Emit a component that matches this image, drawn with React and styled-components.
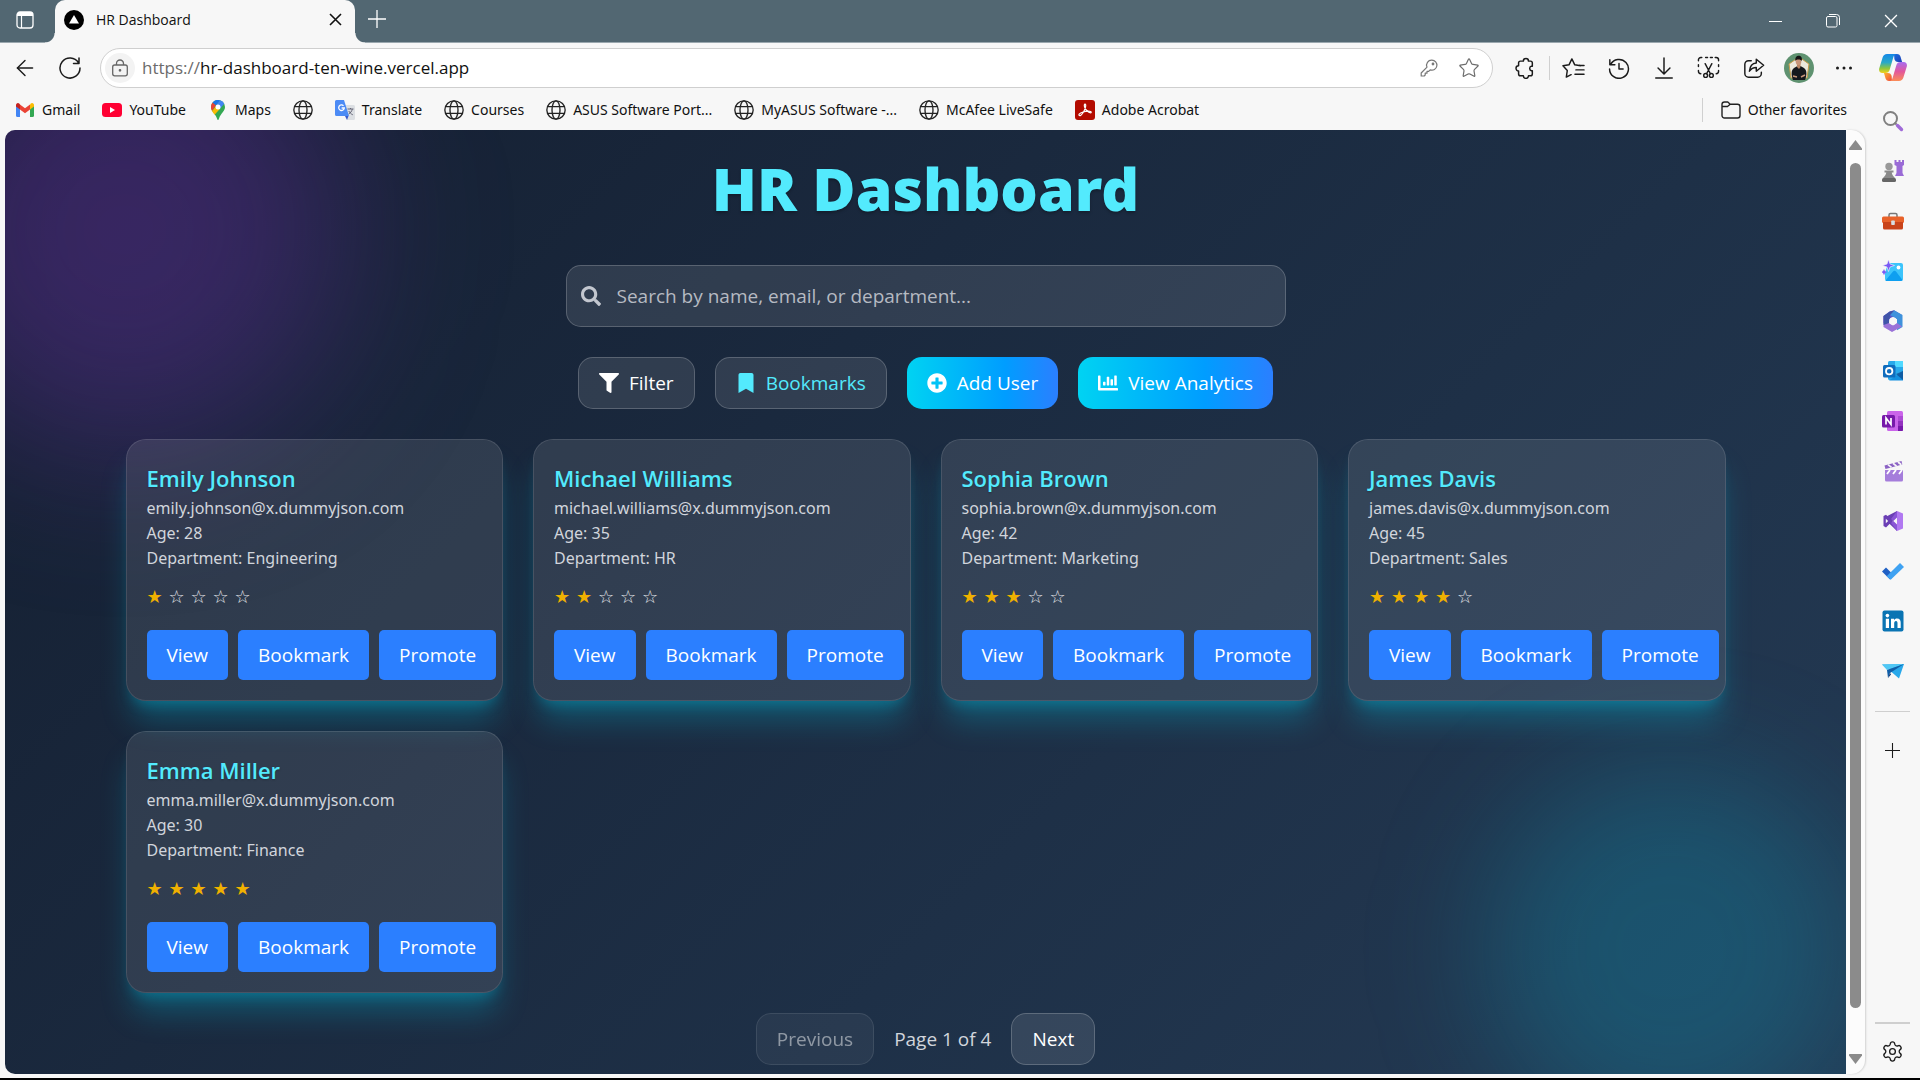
import React from "react";
import styled, { createGlobalStyle, css } from "styled-components";
import { FaSearch, FaFilter, FaBookmark, FaPlusCircle, FaChartBar } from "react-icons/fa";
import { ArrowLeft, Star, Settings } from "lucide-react";

const GlobalStyle = createGlobalStyle`
  *, *::before, *::after { box-sizing: border-box; }
  body { margin: 0; background: #f7f7f7; font-family: "Open Sans", "Noto Sans", sans-serif; }
  button, input { font: inherit; color: inherit; }
  button { border: 0; padding: 0; background: none; cursor: pointer; }
  a { color: inherit; text-decoration: none; }
  h1, h2, p { margin: 0; }
  svg { display: block; flex: none; }
`;

/* ---------- browser frame ---------- */

const Window = styled.div`
  display: flex;
  flex-direction: column;
  height: 100vh;
  min-height: 640px;
  background: #f7f7f7;
  border-bottom: 2px solid #000;
  overflow: hidden;
`;

const TabStrip = styled.header`
  display: flex;
  flex: none;
  height: 43px;
  background: #526772;
  border-bottom: 1px solid #9aa7ae;
  color: #fff;
`;

const StripButton = styled.button`
  display: grid;
  place-items: center;
  width: ${(p) => p.$w}px;
  height: ${(p) => p.$h || 38}px;
`;

const Tab = styled.div`
  position: relative;
  display: flex;
  align-items: center;
  width: 300px;
  height: 43px;
  margin-left: 5px;
  padding: 0 10px 4px 9px;
  border-radius: 10px 10px 0 0;
  background: #f7f7f7;
  color: #111;
  font-size: 14px;
  &::before, &::after {
    content: "";
    position: absolute;
    bottom: 0;
    width: 10px;
    height: 10px;
  }
  &::before { left: -10px; background: radial-gradient(circle at 0 0, transparent 9px, #f7f7f7 10px); }
  &::after { right: -10px; background: radial-gradient(circle at 100% 0, transparent 9px, #f7f7f7 10px); }
`;

const TabTitle = styled.span`
  flex: 1;
  margin-left: 12px;
`;

const WindowControls = styled.div`
  display: flex;
  margin-left: auto;
`;

const Toolbar = styled.div`
  display: flex;
  flex: none;
  align-items: center;
  height: 49px;
  padding-left: 2px;
  color: #1b1b1b;
`;

const ToolButton = styled.button`
  display: grid;
  place-items: center;
  flex: none;
  width: ${(p) => p.$w || 45}px;
  height: 40px;
`;

const AddressBar = styled.form`
  display: flex;
  flex: 1;
  align-items: center;
  height: 40px;
  margin: 0 9px 0 8px;
  padding: 0 3px 0 4px;
  border: 1px solid #cfcfcf;
  border-radius: 20px;
  background: #fff;
  color: #6c6c6c;
  font-size: 17px;
`;

const SiteInfo = styled.button`
  display: grid;
  place-items: center;
  width: 30px;
  height: 30px;
  margin-right: 7px;
  border-radius: 50%;
  background: #f3f3f3;
`;

const AddressInput = styled.input`
  flex: 1;
  min-width: 0;
  padding: 0;
  border: 0;
  outline: 0;
  background: none;
  color: #111;
`;

const AddressAction = styled.button`
  display: grid;
  place-items: center;
  width: 40px;
  height: 30px;
`;

const ToolDivider = styled.span`
  width: 1px;
  height: 24px;
  margin: 0 1px 0 2px;
  background: #d0d0d0;
`;

const Favorites = styled.nav`
  display: flex;
  flex: none;
  align-items: center;
  gap: 22px;
  height: 38px;
  padding: 0 73px 3px 15px;
  color: #111;
  font-family: "Noto Sans", "Open Sans", sans-serif;
  font-size: 14px;
  white-space: nowrap;
`;

const Favorite = styled.a`
  display: flex;
  align-items: center;
  gap: 7px;
`;

const OtherFavorites = styled(Favorite)`
  margin-left: auto;
  padding-left: 18px;
  border-left: 1px solid #d0d0d0;
  height: 24px;
`;

const Body = styled.div`
  display: flex;
  flex: 1;
  min-height: 0;
  padding: 0 0 4px 5px;
`;

const ScrollTrack = styled.div`
  display: flex;
  flex: none;
  flex-direction: column;
  align-items: center;
  gap: 13px;
  width: 19px;
  padding: 10px 0;
  border-radius: 0 14px 14px 0;
  background: #fcfcfc;
  box-shadow: 1px 0 2px rgba(0, 0, 0, 0.15);
`;

const ScrollThumb = styled.div`
  flex: 1;
  width: 11px;
  margin-bottom: 33px;
  border-radius: 6px;
  background: #8b8b8b;
`;

const Sidebar = styled.aside`
  display: flex;
  flex: none;
  flex-direction: column;
  align-items: center;
  width: 55px;
  padding-bottom: 3px;
  color: #1b1b1b;
`;

const SideButton = styled.button`
  display: grid;
  place-items: center;
  flex: none;
  width: 40px;
  height: 40px;
  margin-bottom: 10px;
`;

const SideList = styled.div`
  display: flex;
  flex-direction: column;
  align-items: center;
  margin-top: -29px;
`;

const SideRule = styled.span`
  flex: none;
  width: 35px;
  height: 1px;
  margin: 10px 0 18px;
  background: #cfcfcf;
`;

const SideFooter = styled.div`
  display: flex;
  flex-direction: column;
  align-items: center;
  margin-top: auto;
  padding-top: 7px;
  border-top: 2px solid #cfcfcf;
  width: 35px;
`;

/* ---------- dashboard ---------- */

const Page = styled.main`
  position: relative;
  flex: 1;
  min-width: 0;
  overflow: hidden;
  padding: 30px 30px 0;
  border-top-left-radius: 10px;
  border-bottom-left-radius: 10px;
  background: linear-gradient(135deg, #141e30, #243b55);
  color: #fff;
  font-size: 19px;
  line-height: 30px;
`;

const Glow = styled.div`
  position: absolute;
  border-radius: 50%;
  ${(p) =>
    p.$tone === "purple"
      ? css`
          top: -120px;
          left: -100px;
          width: 440px;
          height: 440px;
          background: rgba(125, 52, 190, 0.33);
          filter: blur(80px);
        `
      : css`
          right: -10px;
          bottom: -60px;
          width: 370px;
          height: 370px;
          background: rgba(6, 182, 212, 0.22);
          filter: blur(60px);
        `}
`;

const Content = styled.div`
  position: relative;
  display: flex;
  flex-direction: column;
  align-items: center;
  max-width: 1600px;
  margin: 0 auto;
`;

const Title = styled.h1`
  margin-bottom: 49px;
  color: #53eafd;
  font-family: "Noto Sans", "Open Sans", sans-serif;
  font-size: 59px;
  font-weight: 900;
  line-height: 56px;
  text-shadow: 0 2px 3px rgba(0, 0, 0, 0.25);
`;

const glass = css`
  border: 1px solid rgba(255, 255, 255, 0.2);
  background: rgba(255, 255, 255, 0.1);
`;

const SearchBox = styled.label`
  ${glass}
  display: flex;
  align-items: center;
  gap: 16px;
  width: 100%;
  max-width: 720px;
  height: 62px;
  margin-bottom: 30px;
  padding: 0 14px;
  border-radius: 15px;
  color: #c3c7cf;
`;

const SearchInput = styled.input`
  flex: 1;
  min-width: 0;
  padding: 0;
  border: 0;
  outline: 0;
  background: none;
  &::placeholder { color: #b6bac2; opacity: 1; }
`;

const Actions = styled.div`
  display: flex;
  flex-wrap: wrap;
  justify-content: center;
  gap: 20px;
  margin-bottom: 30px;
`;

const ActionButton = styled.button`
  display: flex;
  align-items: center;
  gap: 10px;
  height: 52px;
  padding: 0 20px;
  border-radius: 15px;
  ${(p) =>
    p.$solid
      ? css`background: linear-gradient(to right, #00d3f2, #009dff 65%, #2b7fff);`
      : glass}
  ${(p) => p.$accent && css`color: #53eafd;`}
  &:disabled { opacity: 0.5; cursor: default; }
`;

const Grid = styled.div`
  display: grid;
  grid-template-columns: repeat(auto-fill, minmax(370px, 1fr));
  gap: 30px;
  width: 100%;
  margin-bottom: 20px;
`;

const Card = styled.article`
  ${glass}
  padding: 20px;
  border-radius: 20px;
  background-clip: padding-box;
  box-shadow: 0 25px 31px -6px rgba(0, 184, 219, 0.3), 0 10px 13px -7px rgba(0, 184, 219, 0.35);
`;

const Name = styled.h2`
  color: #53eafd;
  font-size: 22px;
  font-weight: 600;
  line-height: 36px;
  text-shadow: 0 1px 2px rgba(0, 0, 0, 0.25);
`;

const Detail = styled.p`
  color: #d1d5dc;
  font-family: "Noto Sans", "Open Sans", sans-serif;
  font-size: 16px;
  line-height: 25px;
`;

const Rating = styled.div`
  display: flex;
  margin: 9px 0 17px;
  font-family: "DejaVu Sans", sans-serif;
  font-size: 18px;
  line-height: 33px;
`;

const Mark = styled.span`
  width: 22px;
  color: ${(p) => (p.$on ? "#f0b100" : "#e5e7eb")};
`;

const CardActions = styled.div`
  display: flex;
  gap: 10px;
`;

const CardButton = styled.button`
  height: 50px;
  padding: 0 20px;
  border-radius: 5px;
  background: #2b7fff;
  color: #fff;
`;

const Pager = styled.div`
  display: flex;
  align-items: center;
  gap: 20px;
  color: #fff;
`;

const PageCount = styled.span`
  color: #d1d5dc;
`;

/* ---------- icons ---------- */

const Line = ({ size = 24, w = 1.4, children }) => (
  <svg width={size} height={size} viewBox="0 0 24 24" fill="none" stroke="currentColor" strokeWidth={w} strokeLinecap="round" strokeLinejoin="round" aria-hidden="true">
    {children}
  </svg>
);

const Art = ({ size = 22, children }) => (
  <svg width={size} height={size} viewBox="0 0 22 22" aria-hidden="true">{children}</svg>
);

const GlobeIcon = () => (
  <svg width="20" height="20" viewBox="0 0 24 24" fill="none" stroke="#222" strokeWidth="1.6" aria-hidden="true">
    <circle cx="12" cy="12" r="11" />
    <ellipse cx="12" cy="12" rx="4.8" ry="11" />
    <path d="M2 8h20M2 16h20" />
  </svg>
);

const GmailIcon = () => (
  <svg width="20" height="20" viewBox="0 0 20 20" aria-hidden="true">
    <path d="M1 5v10.500a1.500 1.500 0 0 0 1.500 1.500H5V8.500z" fill="#4285f4" />
    <path d="M19 5v10.500a1.500 1.500 0 0 1-1.500 1.500H15V8.500z" fill="#34a853" />
    <path d="M15 4.500V9.500l4-3V5a2 2 0 0 0-3.200-1.600z" fill="#fbbc04" />
    <path d="M5 9.500V4.500l5 3.700 5-3.700v5l-5 3.700z" fill="#ea4335" />
    <path d="M1 5v1.500l4 3v-5L4.200 3.400A2 2 0 0 0 1 5z" fill="#c5221f" />
  </svg>
);

const YouTubeIcon = () => (
  <svg width="20" height="20" viewBox="0 0 20 20" aria-hidden="true">
    <rect x="0" y="3" width="20" height="14" rx="3.500" fill="#ff0033" />
    <path d="M8 7v6l5-3z" fill="#fff" />
  </svg>
);

const MapsIcon = () => (
  <svg width="20" height="20" viewBox="0 0 20 20" aria-hidden="true">
    <path d="M10 0a7 7 0 0 1 7 7c0 4-4 6-6 11.500-.3 1-.6 1.500-1 1.500s-.7-.5-1-1.500C7 13 3 11 3 7a7 7 0 0 1 7-7z" fill="#34a853" />
    <path d="M4.600 2.500 8 5.300 4 11C3.300 9.800 3 8.500 3 7c0-1.700.6-3.300 1.600-4.500z" fill="#ea4335" />
    <path d="M4.600 2.500A7 7 0 0 1 12 .3L8 5.300z" fill="#1a73e8" />
    <path d="M12 .3a7 7 0 0 1 4.200 3.500L11.800 9 8 5.300z" fill="#4285f4" />
    <path d="M4 11 8.300 6l3.500 3-5.200 5.700C5.500 13.400 4.600 12.300 4 11z" fill="#fbbc04" />
    <circle cx="10" cy="7" r="2.500" fill="#fff" />
  </svg>
);

const TranslateIcon = () => (
  <svg width="20" height="20" viewBox="0 0 20 20" aria-hidden="true">
    <path d="M7 5h11.500A1.500 1.500 0 0 1 20 6.500v12a1.500 1.500 0 0 1-1.500 1.500H12z" fill="#dcdfe3" />
    <path d="M10 16h3.500L12 20z" fill="#3a5bcc" />
    <path d="M1.500 0H9l5 16H1.500A1.500 1.500 0 0 1 0 14.500v-13A1.500 1.500 0 0 1 1.500 0z" fill="#4c8bf5" />
    <path d="M8.500 5.700A2.800 2.800 0 1 0 9.300 8H6.600" fill="none" stroke="#fff" strokeWidth="1.300" />
    <path d="M12.500 9h6M15.500 8v1M17.300 9c-.5 2.500-2 4-3.600 5M13.800 11c.8 1.500 2.200 3 4 3.800" fill="none" stroke="#667" strokeWidth="1" />
  </svg>
);

const AcrobatIcon = () => (
  <svg width="20" height="20" viewBox="0 0 20 20" aria-hidden="true">
    <rect width="20" height="20" rx="3" fill="#b30b00" />
    <path d="M4 15.200c-.8-1.300 3-3.400 6.800-3.900 3.400-.4 5.600 0 5.400 1-.4 1.600-5.500-1-6.600-5.300-.5-2-.3-3 .4-3 1.500 0 .5 5-1.600 8.300-1.700 2.700-3.500 4-4.400 2.900z" fill="none" stroke="#fff" strokeWidth="1.200" />
  </svg>
);

const FolderIcon = () => (
  <svg width="20" height="20" viewBox="0 0 20 20" fill="none" stroke="#222" strokeWidth="1.400" strokeLinejoin="round" aria-hidden="true">
    <path d="M1 4.500A2.500 2.500 0 0 1 3.500 2H6.800l2.400 2.200h7.300A2.500 2.500 0 0 1 19 6.700v8.800a2.500 2.500 0 0 1-2.500 2.500h-13A2.500 2.500 0 0 1 1 15.500zM1 6.500h5.500l2.700-2.300" />
  </svg>
);

const TabListIcon = () => (
  <svg width="18" height="18" viewBox="0 0 18 18" aria-hidden="true">
    <rect x="1" y="1" width="16" height="16" rx="3" fill="none" stroke="#fff" strokeWidth="1.300" />
    <path d="M1 4a3 3 0 0 1 3-3h10a3 3 0 0 1 3 3v1H1z" fill="#fff" />
    <path d="M5.500 5v12" stroke="#fff" strokeWidth="1.200" />
  </svg>
);

const VercelIcon = () => (
  <svg width="20" height="20" viewBox="0 0 20 20" aria-hidden="true">
    <circle cx="10" cy="10" r="10" fill="#000" />
    <path d="M10 5l5 8.500H5z" fill="#fff" />
  </svg>
);

const PlusIcon = ({ size = 18 }) => (
  <svg width={size} height={size} viewBox="0 0 18 18" stroke="currentColor" strokeWidth="1.300" aria-hidden="true"><path d="M9 0v18M0 9h18" /></svg>
);

const CloseIcon = ({ size = 13, w = 1.2 }) => (
  <svg width={size} height={size} viewBox="0 0 13 13" stroke="currentColor" strokeWidth={w} aria-hidden="true"><path d="M1 1l11 11M12 1L1 12" /></svg>
);

const RefreshIcon = () => (
  <Line w={1.5}><path d="M20.500 6.800A10 10 0 1 0 22 12M21 2v5.500h-5.500" /></Line>
);

const LockIcon = () => (
  <svg width="18" height="18" viewBox="0 0 18 18" fill="none" stroke="#666" strokeWidth="1.300" aria-hidden="true">
    <rect x="1.700" y="6" width="14.600" height="10.800" rx="2" /><path d="M5.500 6V4.500a3.500 3.500 0 0 1 7 0V6" /><circle cx="9" cy="11.300" r=".7" fill="#666" />
  </svg>
);

const KeyIcon = () => (
  <svg width="18" height="18" viewBox="0 0 18 18" fill="none" stroke="#777" strokeWidth="1.200" strokeLinejoin="round" aria-hidden="true">
    <path d="M11.800 1.200a5 5 0 1 1-1.600 9.700L8.700 12.400H7v1.800H5.200V16l-1 1H1.200v-3L7 8.200a5 5 0 0 1 4.800-7z" /><circle cx="13" cy="5" r=".8" fill="#777" />
  </svg>
);

const ExtensionIcon = () => (
  <Line size={22} w={1.6}>
    <path d="M7 4.500h3.200a2.800 2.800 0 0 1 5.600 0H18a2 2 0 0 1 2 2V10h-1a2.600 2.600 0 0 0 0 5h1v3.500a2 2 0 0 1-2 2h-2.200a2.800 2.800 0 0 1-5.600 0H7a2 2 0 0 1-2-2V15.200a2.800 2.800 0 0 1 0-5.600V6.500a2 2 0 0 1 2-2z" />
  </Line>
);

const FavStarIcon = () => (
  <Line size={23} w={1.5}>
    <path d="M9.500 19.500 4.500 22l1-6.800L1 10.200l6.300-1L10.300 3l3 6.200 6 .9M14.500 14.500H23M13.500 19H23M18 10H23" />
  </Line>
);

const HistoryIcon = () => (
  <Line size={22} w={1.6}><path d="M2 3v5.500h5.500M2.800 8.300A10.300 10.300 0 1 1 1.700 13M12 7v6h4.500" /></Line>
);

const DownloadIcon = () => (
  <Line size={22} w={1.6}><path d="M12 1v17M5.500 12l6.500 6.500 6.500-6.500M3 23h18" /></Line>
);

const ScreenshotIcon = () => (
  <Line size={23} w={1.5}>
    <path d="M1.500 5V4a2.500 2.500 0 0 1 2.500-2.500h1M9 1.500h2M14 1.500h2M19 1.500h1A2.500 2.500 0 0 1 22.500 4v1M22.500 9v2M22.500 15v1a2.500 2.500 0 0 1-2.500 2.500M1.500 9v2M1.500 15v1A2.500 2.500 0 0 0 4 18.500M8.500 8l5.500 10.500M15.500 8 10 18.500" />
    <circle cx="9" cy="20.300" r="2" /><circle cx="15" cy="20.300" r="2" />
  </Line>
);

const ShareIcon = () => (
  <Line size={22} w={1.6}>
    <path d="M9 4H6a4 4 0 0 0-4 4v10a4 4 0 0 0 4 4h10a4 4 0 0 0 4-4v-1.500" />
    <path d="M14.500 2.500v4C9.500 6.800 7.500 10 7 15.500c2-3 4-4 7.500-4v4L22.500 9z" />
  </Line>
);

const Avatar = () => (
  <svg width="30" height="30" viewBox="0 0 30 30" aria-hidden="true">
    <defs><clipPath id="face"><circle cx="15" cy="15" r="15" /></clipPath></defs>
    <g clipPath="url(#face)">
      <rect width="30" height="30" fill="#5f9270" />
      <path d="M5 11l10-7 10 7-2 14H7z" fill="#ece8dc" stroke="#c59b4a" strokeWidth="1" />
      <path d="M9 27c-2-5-2-10 1-12l3.500-2h3L20 15c3 2 3 7 1 12z" fill="#15171c" />
      <path d="M13 11h3.500v3L15 16l-2-2z" fill="#b98565" />
      <ellipse cx="14.500" cy="8.500" rx="2.800" ry="3.500" fill="#c8957a" />
      <path d="M11.300 8c-.3-4 1.500-5.300 3.500-5.300s3.700 1.500 3 5.300c-.8-1.800-5-2.300-6.500 0z" fill="#151313" />
      <path d="M9 23l4 1M21 22l-4 2" stroke="#c8957a" strokeWidth="1.500" />
    </g>
  </svg>
);

const DotsIcon = () => (
  <svg width="18" height="18" viewBox="0 0 18 18" fill="currentColor" aria-hidden="true"><circle cx="2.500" cy="9" r="1.500" /><circle cx="9" cy="9" r="1.500" /><circle cx="15.500" cy="9" r="1.500" /></svg>
);

const CopilotIcon = () => (
  <svg width="28" height="27" viewBox="0 0 28 27" aria-hidden="true">
    <defs>
      <linearGradient id="cpA" x1="0" y1="0" x2="0" y2="1"><stop offset="0" stopColor="#1488e8" /><stop offset=".45" stopColor="#29a9c8" /><stop offset=".75" stopColor="#8cc63f" /><stop offset="1" stopColor="#f3d11b" /></linearGradient>
      <linearGradient id="cpB" x1="0" y1="0" x2="0" y2="1"><stop offset="0" stopColor="#a76cf0" /><stop offset=".5" stopColor="#e2579c" /><stop offset="1" stopColor="#fb8d57" /></linearGradient>
      <linearGradient id="cpC" x1="0" y1="0" x2="1" y2="1"><stop offset="0" stopColor="#1b6fe0" /><stop offset="1" stopColor="#1f3fb5" /></linearGradient>
      <linearGradient id="cpD" x1="0" y1="0" x2="1" y2="1"><stop offset="0" stopColor="#ffb02e" /><stop offset="1" stopColor="#ef4a3c" /></linearGradient>
    </defs>
    <path d="M15 0h3c2 0 3 1.200 3.600 3l1.500 5H19c-2 0-3-1-3.600-3z" fill="url(#cpC)" />
    <path d="M13 27h-3c-2 0-3-1.200-3.600-3L5 19h4c2 0 3 1 3.600 3z" fill="url(#cpD)" />
    <path d="M8 0h10c-2 0-3 1.200-3.600 3l-3.800 13c-.6 2-2 3-4 3H3.500C.5 19-.3 17 .2 14.500L3.600 3.500C4.300 1.200 5.800 0 8 0z" fill="url(#cpA)" />
    <path d="M20 27H10c2 0 3-1.200 3.600-3l3.800-13c.6-2 2-3 4-3h3.100c3 0 3.800 2 3.300 4.500l-3.400 11c-.7 2.300-2.200 3.500-4.400 3.500z" fill="url(#cpB)" />
  </svg>
);

const SideSearch = () => (
  <Art><circle cx="8.500" cy="8.500" r="6.500" fill="none" stroke="#808080" strokeWidth="2" /><path d="M12.500 12.500l2 2" stroke="#808080" strokeWidth="2" /><path d="M15.500 15.500l4 4" stroke="#a06bd8" strokeWidth="3.400" strokeLinecap="round" /></Art>
);
const SideChess = () => (
  <Art>
    <path d="M12.500 0h2v2h2V0h2v2h1.500V0h2v5l-1.500 1v7l1.500 3h-9l1.500-3V6L12.500 5z" fill="#9a6bd6" />
    <circle cx="7" cy="6.500" r="3.700" fill="#999" /><path d="M2.500 10.500h9v2H9.700c.2 2 1.800 4 3.300 5.500H1c1.500-1.500 3.100-3.500 3.300-5.500H2.500z" fill="#8a8a8a" /><rect y="18" width="14" height="4" rx="1.500" fill="#666" />
  </Art>
);
const SideToolbox = () => (
  <Art>
    <path d="M7 7V5a1.500 1.500 0 0 1 1.500-1.500h5A1.500 1.500 0 0 1 15 5v2" fill="none" stroke="#777" strokeWidth="1.500" />
    <rect y="6.500" width="22" height="6.500" rx="1.500" fill="#e8622a" /><path d="M1 12h20v6a1.500 1.500 0 0 1-1.500 1.500h-17A1.500 1.500 0 0 1 1 18z" fill="#c9431a" /><rect x="9.200" y="10.500" width="3.600" height="4.500" rx=".8" fill="#d7dde2" />
  </Art>
);
const SideImage = () => (
  <Art>
    <path d="M6 3h13a2 2 0 0 1 2 2v14a2 2 0 0 1-2 2H5a2 2 0 0 1-2-2v-6z" fill="#3cc4fb" /><path d="M3.500 20.500 11 11.500c1-1 2-1 3 0l6.500 8.500a2 2 0 0 1-1.500 1H5a2 2 0 0 1-1.500-.5z" fill="#0e9ff0" />
    <circle cx="16.500" cy="7.500" r="1.900" fill="#fff" />
    <path d="M6.500-.5 8 4l4.500 1.500L8 7 6.500 11.500 5 7 .5 5.500 5 4z" fill="#7a5af5" stroke="#f7f7f7" strokeWidth=".6" /><path d="M2 9l1 2.300L5.300 12 3 13l-1 2.300L1 13l-2.300-1L1 11.300z" fill="#7a5af5" />
  </Art>
);
const Side365 = () => (
  <Art>
    <path d="M7.500 1.500 12 .2 20 5v7L14.500 8.800 11 7 7 9.500V16L1.500 13V6z" fill="#5a55c8" />
    <path d="M12 .2 20.500 5v12L15 20.200V13V9L8 5z" fill="#3f92dc" />
    <path d="M1.500 6v11l8.500 5 10-5.500L15 13l-4 2.500-4-2.200V7.500z" fill="#9a72d8" />
    <path d="M1.500 6 8 1.500l4-.8L8 5 7 13l-5.500 2z" fill="#4054a8" />
    <circle cx="11" cy="11" r="3.700" fill="#f7f7f7" />
  </Art>
);
const SideOutlook = () => (
  <Art>
    <rect x="6" y="1" width="15" height="19" rx="1.500" fill="#28a8ea" /><path d="M13 1h8v6h-8z" fill="#50d9ff" /><path d="M21 11v9.500H7z" fill="#1490df" /><path d="M14 14l7-3v9z" fill="#0a2767" opacity=".5" />
    <rect x="1" y="5" width="12.500" height="12.500" rx="1.500" fill="#0f6cbd" /><circle cx="7.200" cy="11.200" r="3.200" fill="none" stroke="#fff" strokeWidth="1.800" />
  </Art>
);
const SideOneNote = () => (
  <Art>
    <rect x="5" y="1" width="16" height="20" rx="1.500" fill="#ca64ea" /><path d="M16 6h5v5h-5z" fill="#ae4bd5" /><path d="M16 11h5v5h-5z" fill="#9332bf" /><path d="M16 16h5v4a1 1 0 0 1-1 1h-4z" fill="#7719aa" />
    <rect x="0" y="5" width="13" height="12.500" rx="1.500" fill="#7719aa" /><path d="M4 14.500V8l5 6.500V8" fill="none" stroke="#fff" strokeWidth="1.700" />
  </Art>
);
const SideClapper = () => (
  <Art>
    <path d="M2.500 5.500 19.500 1l.8 3.500L3.500 9z" fill="#8b62c4" /><path d="M6 4.600l3.500 2.800M11 3.300l3.500 2.800M16 2l3.300 2.700" stroke="#f7f7f7" strokeWidth="1.800" />
    <path d="M3 10h18v10a1.500 1.500 0 0 1-1.500 1.500h-15A1.500 1.500 0 0 1 3 20z" fill="#a57ddb" /><path d="M5 14l3-4M11 14l3-4M17 14l3-4" stroke="#fff" strokeWidth="1.800" />
  </Art>
);
const SideVS = () => (
  <Art>
    <path d="M15 1l6 2.500v15L15 21z" fill="#b179f1" /><path d="M15 1v5.500L4 17.500 1.500 16V6L4 4.700 15 15.500V21L1.500 8z" fill="#6b3fb5" /><path d="M15 1 9 9l2.300 2L15 7.500zM15 21l-6-8 2.300-2L15 14.500z" fill="#8a55d6" /><path d="M3.800 8.800 6.200 11l-2.400 2.200z" fill="#f7f7f7" />
  </Art>
);
const SideTodo = () => (
  <Art><path d="M0 11.500 4 7.500l8 8-4 4z" fill="#1f5fc4" /><path d="M4.700 16.200 18 3l4 4L8.700 19.800z" fill="#3fa2f2" /></Art>
);
const SideLinkedIn = () => (
  <Art>
    <rect x=".5" y=".5" width="21" height="21" rx="2" fill="#0a74b3" /><circle cx="5.400" cy="5.600" r="1.800" fill="#fff" /><path d="M3.800 8.700h3.200V18H3.800zM9 8.700h3V10c.6-1 1.700-1.600 3-1.600 2.800 0 3.700 1.700 3.700 4.300V18h-3.200v-4.700c0-1.300-.3-2.300-1.500-2.300-1.300 0-1.800 1-1.800 2.300V18H9z" fill="#fff" />
  </Art>
);
const SidePlane = () => (
  <Art><path d="M0 4.500 22 4l-5 14.500L5.500 8.500z" fill="#28a8ea" /><path d="M0 4.500 22 4 5 10z" fill="#50c8f5" /><path d="M22 4 5 10l1 8 2-5z" fill="#0f5ea8" /><path d="M6 18l3-3.500-1-1.500z" fill="#0a2f6b" /></Art>
);

/* ---------- data ---------- */

const favorites = [
  { label: "Gmail", icon: GmailIcon },
  { label: "YouTube", icon: YouTubeIcon },
  { label: "Maps", icon: MapsIcon },
  { label: "", icon: GlobeIcon },
  { label: "Translate", icon: TranslateIcon },
  { label: "Courses", icon: GlobeIcon },
  { label: "ASUS Software Port...", icon: GlobeIcon },
  { label: "MyASUS Software -...", icon: GlobeIcon },
  { label: "McAfee LiveSafe", icon: GlobeIcon },
  { label: "Adobe Acrobat", icon: AcrobatIcon },
];

const tools = [
  ["Favorites", FavStarIcon],
  ["History", HistoryIcon],
  ["Downloads", DownloadIcon],
  ["Screenshot", ScreenshotIcon],
  ["Share", ShareIcon],
  ["Profile", Avatar],
  ["Settings and more", DotsIcon],
];

const sideApps = [
  ["Search", SideSearch],
  ["Games", SideChess],
  ["Tools", SideToolbox],
  ["Image Creator", SideImage],
  ["Microsoft 365", Side365],
  ["Outlook", SideOutlook],
  ["OneNote", SideOneNote],
  ["Clipchamp", SideClapper],
  ["Visual Studio", SideVS],
  ["To Do", SideTodo],
  ["LinkedIn", SideLinkedIn],
  ["Drop", SidePlane],
];

const employees = [
  { name: "Emily Johnson", email: "emily.johnson@x.dummyjson.com", age: 28, department: "Engineering", rating: 1 },
  { name: "Michael Williams", email: "michael.williams@x.dummyjson.com", age: 35, department: "HR", rating: 2 },
  { name: "Sophia Brown", email: "sophia.brown@x.dummyjson.com", age: 42, department: "Marketing", rating: 3 },
  { name: "James Davis", email: "james.davis@x.dummyjson.com", age: 45, department: "Sales", rating: 4 },
  { name: "Emma Miller", email: "emma.miller@x.dummyjson.com", age: 30, department: "Finance", rating: 5 },
];

function EmployeeCard({ person }) {
  return (
    <Card>
      <Name>{person.name}</Name>
      <Detail>{person.email}</Detail>
      <Detail>Age: {person.age}</Detail>
      <Detail>Department: {person.department}</Detail>
      <Rating aria-label={`${person.rating} of 5`}>
        {[1, 2, 3, 4, 5].map((n) => (
          <Mark key={n} $on={n <= person.rating}>{n <= person.rating ? "★" : "☆"}</Mark>
        ))}
      </Rating>
      <CardActions>
        <CardButton>View</CardButton>
        <CardButton>Bookmark</CardButton>
        <CardButton>Promote</CardButton>
      </CardActions>
    </Card>
  );
}

export default function App() {
  return (
    <Window>
      <GlobalStyle />
      <TabStrip>
        <StripButton $w={50} $h={40} aria-label="Tab actions"><TabListIcon /></StripButton>
        <Tab>
          <VercelIcon />
          <TabTitle>HR Dashboard</TabTitle>
          <StripButton $w={20} aria-label="Close tab"><CloseIcon w={1.6} /></StripButton>
        </Tab>
        <StripButton $w={44} aria-label="New tab"><PlusIcon /></StripButton>
        <WindowControls>
          <StripButton $w={58} $h={42} aria-label="Minimize"><svg width="13" height="13" stroke="#fff"><path d="M0 6.500h13" /></svg></StripButton>
          <StripButton $w={58} $h={42} aria-label="Restore">
            <svg width="14" height="14" fill="none" stroke="#fff"><rect x=".5" y="2.500" width="10.500" height="10.500" rx="1.500" /><path d="M3 .5h7.500a3 3 0 0 1 3 3V11" /></svg>
          </StripButton>
          <StripButton $w={58} $h={42} aria-label="Close"><CloseIcon size={14} /></StripButton>
        </WindowControls>
      </TabStrip>

      <Toolbar>
        <ToolButton aria-label="Back"><ArrowLeft size={26} strokeWidth={1.300} /></ToolButton>
        <ToolButton aria-label="Refresh"><RefreshIcon /></ToolButton>
        <AddressBar>
          <SiteInfo type="button" aria-label="Site information"><LockIcon /></SiteInfo>
          <label htmlFor="address">https://</label>
          <AddressInput id="address" defaultValue="hr-dashboard-ten-wine.vercel.app" />
          <AddressAction type="button" aria-label="Passwords"><KeyIcon /></AddressAction>
          <AddressAction type="button" aria-label="Add to favorites"><Star size={22} strokeWidth={1.300} /></AddressAction>
        </AddressBar>
        <ToolButton aria-label="Extensions"><ExtensionIcon /></ToolButton>
        <ToolDivider />
        {tools.map(([label, Icon]) => (
          <ToolButton key={label} aria-label={label}><Icon /></ToolButton>
        ))}
        <ToolButton $w={54} aria-label="Copilot"><CopilotIcon /></ToolButton>
      </Toolbar>

      <Favorites aria-label="Favorites bar">
        {favorites.map(({ label, icon: Icon }, i) => (
          <Favorite key={i} href="#" aria-label={label || "Website"}><Icon />{label}</Favorite>
        ))}
        <OtherFavorites href="#"><FolderIcon />Other favorites</OtherFavorites>
      </Favorites>

      <Body>
        <Page>
          <Glow $tone="purple" />
          <Glow $tone="cyan" />
          <Content>
            <Title>HR Dashboard</Title>
            <SearchBox>
              <FaSearch size={20} />
              <SearchInput aria-label="Search" placeholder="Search by name, email, or department..." />
            </SearchBox>
            <Actions>
              <ActionButton><FaFilter size={20} />Filter</ActionButton>
              <ActionButton $accent><FaBookmark size={20} />Bookmarks</ActionButton>
              <ActionButton $solid><FaPlusCircle size={20} />Add User</ActionButton>
              <ActionButton $solid><FaChartBar size={20} />View Analytics</ActionButton>
            </Actions>
            <Grid>
              {employees.map((p) => <EmployeeCard key={p.email} person={p} />)}
            </Grid>
            <Pager>
              <ActionButton disabled>Previous</ActionButton>
              <PageCount>Page 1 of 4</PageCount>
              <ActionButton>Next</ActionButton>
            </Pager>
          </Content>
        </Page>
        <ScrollTrack aria-hidden="true">
          <svg width="13" height="10" fill="#8b8b8b"><path d="M6.500 0 13 8.500a1 1 0 0 1-.8 1.500H.8A1 1 0 0 1 0 8.500z" /></svg>
          <ScrollThumb />
          <svg width="13" height="10" fill="#8b8b8b"><path d="M6.500 10 0 1.500A1 1 0 0 1 .8 0h11.400A1 1 0 0 1 13 1.500z" /></svg>
        </ScrollTrack>
        <Sidebar>
          <SideList>
            {sideApps.map(([label, Icon]) => (
              <SideButton key={label} aria-label={label}><Icon /></SideButton>
            ))}
            <SideRule />
            <SideButton aria-label="Customize"><PlusIcon size={15} /></SideButton>
          </SideList>
          <SideFooter>
            <ToolButton aria-label="Sidebar settings"><Settings size={23} strokeWidth={1.400} /></ToolButton>
          </SideFooter>
        </Sidebar>
      </Body>
    </Window>
  );
}
